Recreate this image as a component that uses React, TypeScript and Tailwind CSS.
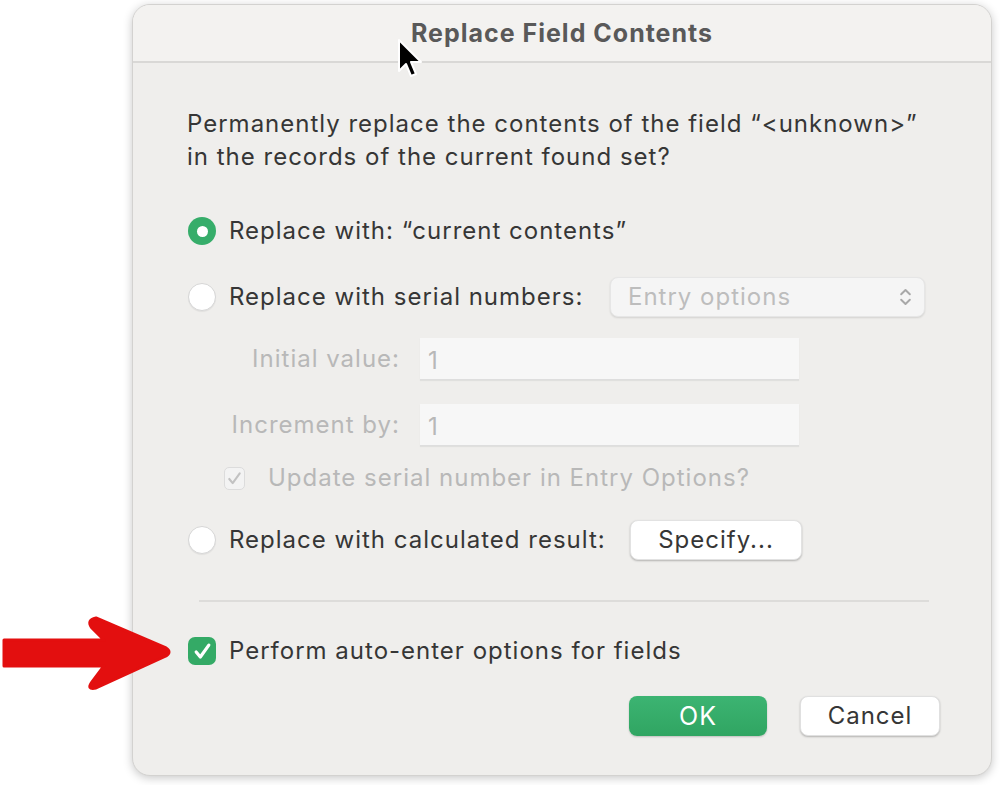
import React from 'react';

const font = { fontFamily: '"Inter", "Liberation Sans", sans-serif' };

const Radio = ({ checked }: { checked?: boolean }) =>
  checked ? (
    <span className="w-[28px] h-[28px] rounded-full bg-[#36ad6a] flex items-center justify-center shrink-0">
      <span className="w-[11px] h-[11px] rounded-full bg-white" />
    </span>
  ) : (
    <span className="w-[28px] h-[28px] rounded-full bg-white border border-[#d6d6d6] shadow-[0_1px_1px_rgba(0,0,0,0.06)] shrink-0" />
  );

const Check = ({ className = '', width = 2.6 }: { className?: string; width?: number }) => (
  <svg viewBox="0 0 20 20" className={className} fill="none" stroke="currentColor" strokeWidth={width} strokeLinecap="round" strokeLinejoin="round">
    <path d="M4.5 10.5l3.6 4.3L15.5 4.5" />
  </svg>
);

export default function App() {
  return (
    <div className="w-[1000px] h-[785px] bg-white relative overflow-hidden pl-[132px] pt-[4px]" style={font}>
      {/* Dialog */}
      <div className="w-[860px] h-[772px] rounded-[18px] bg-[#efeeec] border border-[#d3d2d0] shadow-[0_2px_10px_rgba(0,0,0,0.22)] flex flex-col overflow-hidden">
        <div className="h-[58px] bg-[#f3f2f0] border-b-2 border-[#d9d8d6] flex items-center justify-center shrink-0">
          <span className="text-[25px] font-bold text-[#595959] tracking-[1px] pt-[2px]">Replace Field Contents</span>
        </div>

        <div className="flex flex-col pl-[54px] text-[24px] tracking-[1px] text-[#363636] leading-none">
          <p className="mt-[44px] leading-[33px] w-[790px]">
            Permanently replace the contents of the field “&lt;unknown&gt;”
            <br />
            in the records of the current found set?
          </p>

          <div className="mt-[38px] h-[40px] flex items-center gap-[13px] pl-[1px]">
            <Radio checked />
            <span>Replace with: “current contents”</span>
          </div>

          <div className="mt-[26px] h-[40px] flex items-center gap-[13px] pl-[1px]">
            <Radio />
            <span className="w-[368px]">Replace with serial numbers:</span>
            <div className="w-[315px] h-[40px] rounded-[8px] bg-[#f5f5f5] shadow-[0_1px_2px_rgba(0,0,0,0.12)] border border-[#e6e6e6] flex items-center justify-between pl-[17px] pr-[12px] text-[#bdbdbd]">
              <span>Entry options</span>
              <svg viewBox="0 0 12 20" className="w-[13px] h-[22px]" fill="none" stroke="#a8a8a8" strokeWidth="1.8" strokeLinecap="round" strokeLinejoin="round">
                <path d="M2 7.5L6 3.5l4 4M2 12.5l4 4 4-4" />
              </svg>
            </div>
          </div>

          <div className="mt-[21px] h-[42px] flex items-center text-[#b8b8b8]">
            <span className="w-[213px] text-right">Initial value:</span>
            <div className="ml-[20px] w-[379px] h-[42px] bg-[#f7f7f7] border-b border-[#dedede] shadow-[0_1px_1px_rgba(0,0,0,0.06)] flex items-center pl-[8px] pt-[4px]">1</div>
          </div>

          <div className="mt-[24px] h-[42px] flex items-center text-[#b8b8b8]">
            <span className="w-[213px] text-right">Increment by:</span>
            <div className="ml-[20px] w-[379px] h-[42px] bg-[#f7f7f7] border-b border-[#dedede] shadow-[0_1px_1px_rgba(0,0,0,0.06)] flex items-center pl-[8px] pt-[4px]">1</div>
          </div>

          <div className="mt-[17px] h-[30px] flex items-center pl-[37px] gap-[23px] text-[#b8b8b8]">
            <span className="w-[21px] h-[23px] rounded-[5px] border border-[#dcdcdc] bg-[#f3f3f3] flex items-center justify-center text-[#c2c2c2]">
              <Check className="w-[19px] h-[19px]" width={2.2} />
            </span>
            <span>Update serial number in Entry Options?</span>
          </div>

          <div className="mt-[27px] h-[40px] flex items-center gap-[13px] pl-[1px]">
            <Radio />
            <span className="w-[388px]">Replace with calculated result:</span>
            <div className="w-[172px] h-[40px] rounded-[8px] bg-white shadow-[0_1px_2px_rgba(0,0,0,0.25)] border border-[#e2e2e2] flex items-center justify-center">
              Specify...
            </div>
          </div>

          <div className="mt-[40px] ml-[12px] w-[730px] h-[2px] bg-[#dddcda]" />

          <div className="mt-[34px] h-[30px] flex items-center gap-[13px] pl-[1px]">
            <span className="w-[28px] h-[28px] rounded-[7px] bg-[#34aa66] flex items-center justify-center text-white">
              <Check className="w-[23px] h-[23px]" width={2.8} />
            </span>
            <span>Perform auto-enter options for fields</span>
          </div>

          <div className="mt-[30px] h-[40px] flex items-center justify-end gap-[33px] pr-[51px]">
            <div className="w-[138px] h-[40px] rounded-[8px] bg-gradient-to-b from-[#3cb472] to-[#30a562] shadow-[0_1px_2px_rgba(0,0,0,0.2)] flex items-center justify-center text-white text-[25px]">
              OK
            </div>
            <div className="w-[140px] h-[40px] rounded-[8px] bg-white border border-[#e0e0e0] shadow-[0_1px_2px_rgba(0,0,0,0.25)] flex items-center justify-center">
              Cancel
            </div>
          </div>
        </div>
      </div>

      {/* Red annotation arrow */}
      <svg className="absolute left-0 top-[612px]" width="180" height="84" viewBox="0 0 180 84">
        <path
          d="M4 28 H104 L92 16 Q86 8 96 6 L166 36 Q172 40 166 44 L96 76 Q86 78 92 70 L104 54 H4 Z"
          fill="#e30f0f"
          stroke="#e30f0f"
          strokeWidth="3"
          strokeLinejoin="round"
        />
      </svg>

      {/* Mouse cursor */}
      <svg className="absolute left-[396px] top-[38px]" width="32" height="44" viewBox="0 0 32 44">
        <path d="M3 2 L3 33 L10 26 L15 38 L20 36 L15 24 L25 24 Z" fill="#000" stroke="#fff" strokeWidth="2" strokeLinejoin="round" />
      </svg>
    </div>
  );
}
